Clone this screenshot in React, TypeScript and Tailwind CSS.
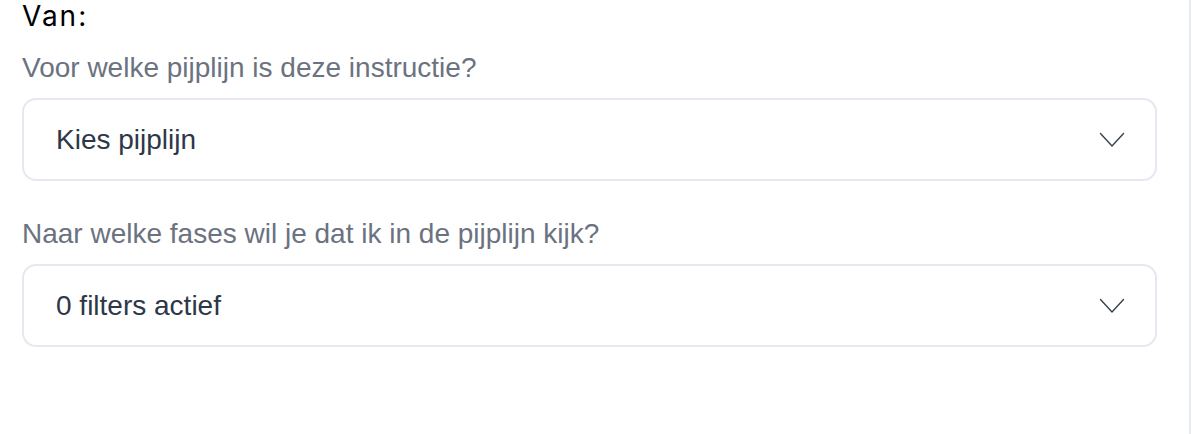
import React from 'react';

const Chevron = () => (
  <svg width="26" height="16" viewBox="0 0 26 16" fill="none" className="shrink-0">
    <path d="M1.5 1.5L13 14L24.5 1.5" stroke="#374151" strokeWidth="1.4" strokeLinecap="round" strokeLinejoin="round" />
  </svg>
);

const SelectField = ({ label, value, className = '' }: { label: string; value: string; className?: string }) => (
  <div className={className}>
    <p className="text-[28px] leading-[32px] text-[#6b7280]">{label}</p>
    <button
      type="button"
      className="mt-[14px] flex h-[83px] w-full items-center justify-between rounded-[14px] border-2 border-[#e5e9ef] bg-white pl-[32px] pr-[30px] text-left"
    >
      <span className="text-[28px] text-[#2d3748]">{value}</span>
      <Chevron />
    </button>
  </div>
);

const App = () => {
  return (
    <div className="flex h-[434px] w-full bg-white" style={{ fontFamily: '"Liberation Sans", Arial, sans-serif' }}>
      <div className="flex-1 pl-[22px] pr-[32px]">
        <h2
          className="text-[28px] font-normal leading-[32px] tracking-[2px] text-black"
          style={{ fontFamily: 'Inter, "Noto Sans", sans-serif' }}
        >
          Van:
        </h2>
        <SelectField className="mt-[20px]" label="Voor welke pijplijn is deze instructie?" value="Kies pijplijn" />
        <SelectField className="mt-[37px]" label="Naar welke fases wil je dat ik in de pijplijn kijk?" value="0 filters actief" />
      </div>
      <div className="w-[2px] bg-[#e8ebef]" />
      <div className="w-[1px]" />
    </div>
  );
};

export default App;
